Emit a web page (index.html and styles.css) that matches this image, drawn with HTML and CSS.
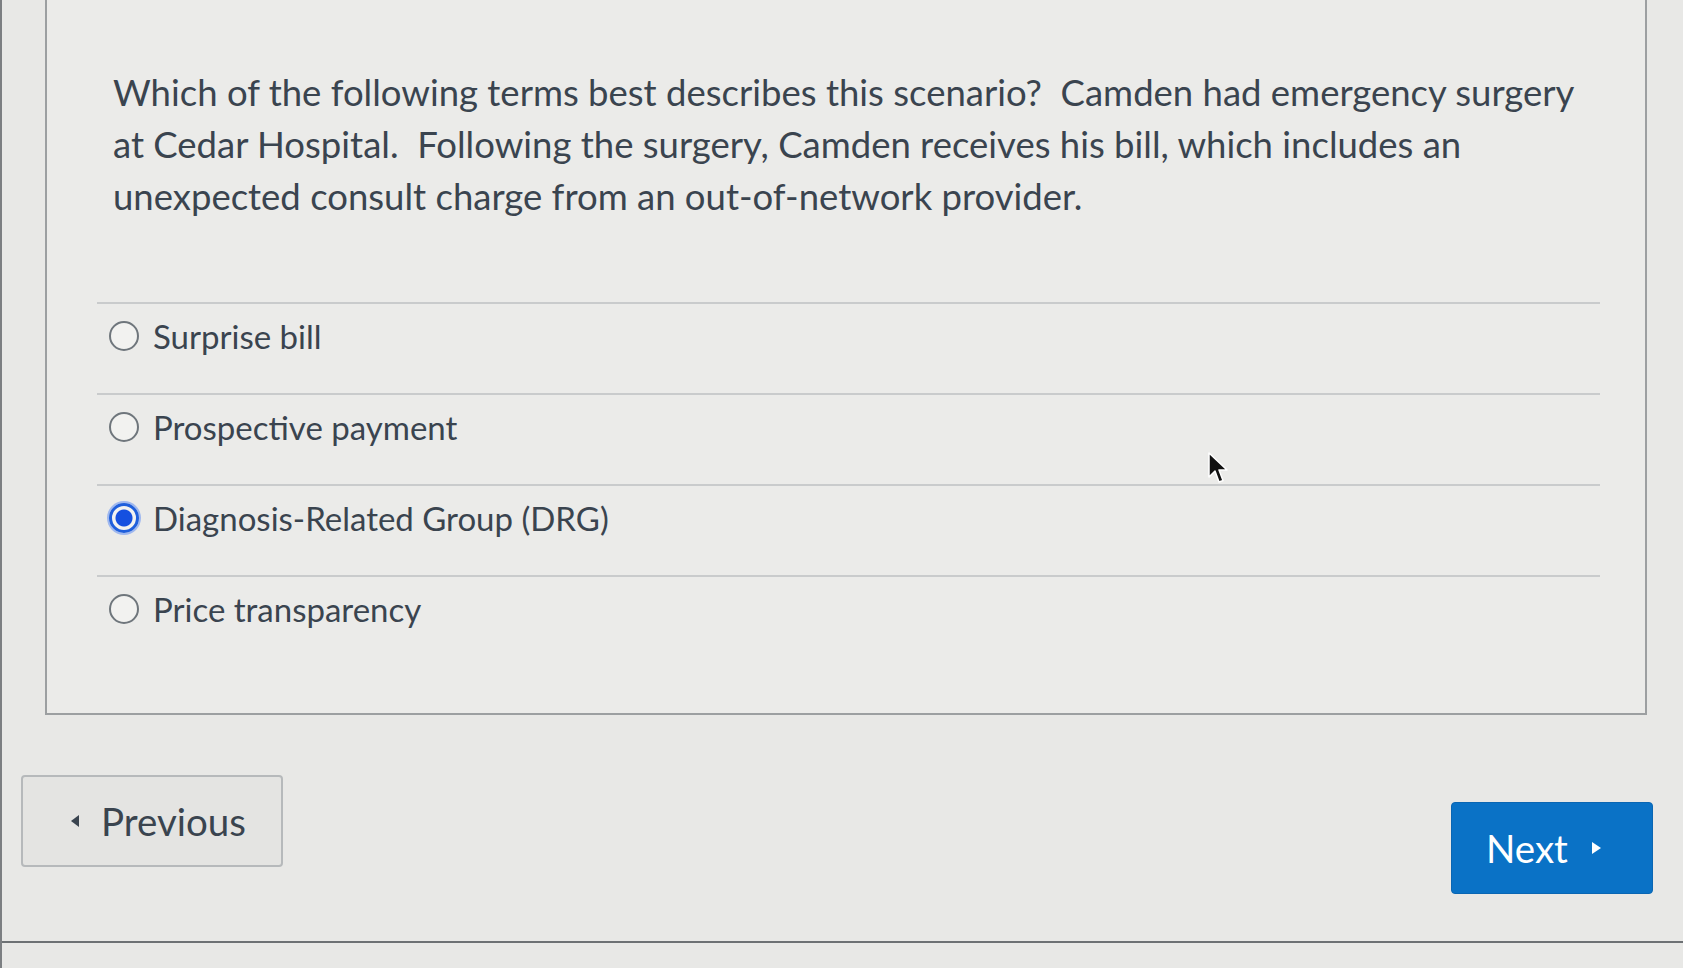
FILE: index.html
```html
<!DOCTYPE html>
<html lang="en">
<head>
<meta charset="utf-8">
<title>Quiz question</title>
<link rel="stylesheet" href="styles.css">
</head>
<body>
<div class="page">
  <section class="card">
    <p class="question">Which of the following terms best describes this scenario?&nbsp; Camden had emergency surgery<br>at Cedar Hospital.&nbsp; Following the surgery, Camden receives his bill, which includes an<br>unexpected consult charge from an out-of-network provider.</p>
    <ul class="answers">
      <li class="answer"><span class="radio"></span><span class="label">Surprise bill</span></li>
      <li class="answer"><span class="radio"></span><span class="label">Prospective payment</span></li>
      <li class="answer"><span class="radio checked"></span><span class="label">Diagnosis-Related Group (DRG)</span></li>
      <li class="answer"><span class="radio"></span><span class="label">Price transparency</span></li>
    </ul>
  </section>
  <nav class="nav">
    <button class="btn btn-prev"><span class="tri tri-left"></span>Previous</button>
    <button class="btn btn-next">Next<span class="tri tri-right"></span></button>
  </nav>
  <div class="footer-rule"></div>
  <svg class="cursor" width="22" height="34" viewBox="0 0 22 34"><path d="M2 1 L2 25 L8 19 L12 30 L16 28.5 L12 18 L20 18 Z" fill="#111" stroke="#fff" stroke-width="1.5" stroke-linejoin="round"/></svg>
</div>
</body>
</html>
```
FILE: styles.css
```css
* { box-sizing: border-box; }
html, body { margin: 0; padding: 0; }
body {
  background: #e8e8e6;
  font-family: Lato, "Open Sans", "Liberation Sans", sans-serif;
  color: #3a444f;
  width: 1683px;
  height: 968px;
  overflow: hidden;
}
.page {
  position: relative;
  height: 968px;
  border-left: 2px solid #7c7f82;
}
.card {
  margin-left: 43px;
  width: 1602px;
  height: 715px;
  background: #ebebe9;
  border: 2px solid #9c9fa1;
  border-top: none;
  padding: 66px 45px 0 50px;
}
.question {
  margin: 0;
  padding-left: 16px;
  font-size: 36.5px;
  line-height: 52px;
}
.answers {
  list-style: none;
  margin: 80px 0 0;
  padding: 0;
}
.answer {
  display: flex;
  align-items: center;
  gap: 14px;
  height: 91px;
  padding: 15px 0 40px 12px;
  border-top: 2px solid #c9cbcc;
  font-size: 33px;
}
.radio {
  width: 30px;
  height: 30px;
  border-radius: 50%;
  border: 2px solid #6f767c;
  background: #f2f2f0;
  flex: none;
}
.radio.checked {
  border: 3px solid #1f5fdc;
  background: radial-gradient(circle, #1550e0 0 8px, #f2f2f0 9px);
  box-shadow: 0 0 0 2px #9fb8ef;
}
.label { line-height: 36px; }
.nav {
  display: flex;
  justify-content: space-between;
  align-items: flex-start;
  padding: 60px 30px 0 19px;
}
.btn {
  font-family: Lato, "Open Sans", "Liberation Sans", sans-serif;
  font-size: 38.5px;
  height: 92px;
  border-radius: 4px;
  display: flex;
  align-items: center;
  cursor: pointer;
}
.btn-prev {
  width: 262px;
  background: #e4e4e2;
  border: 2px solid #b6b9bb;
  color: #3a444f;
  padding: 0 0 0 48px;
  gap: 22px;
}
.btn-next {
  margin-top: 27px;
  width: 202px;
  background: #0a72c6;
  border: 1px solid #0a66b3;
  color: #fff;
  padding: 0 0 0 34px;
  gap: 24px;
}
.tri {
  width: 0;
  height: 0;
  border-top: 6px solid transparent;
  border-bottom: 6px solid transparent;
}
.tri-left { border-right: 8px solid #3a444f; }
.tri-right { border-left: 9px solid #fff; }
.footer-rule {
  margin-top: 47px;
  height: 2px;
  background: #6d7174;
}
.cursor {
  position: absolute;
  left: 1205px;
  top: 452px;
}
```
